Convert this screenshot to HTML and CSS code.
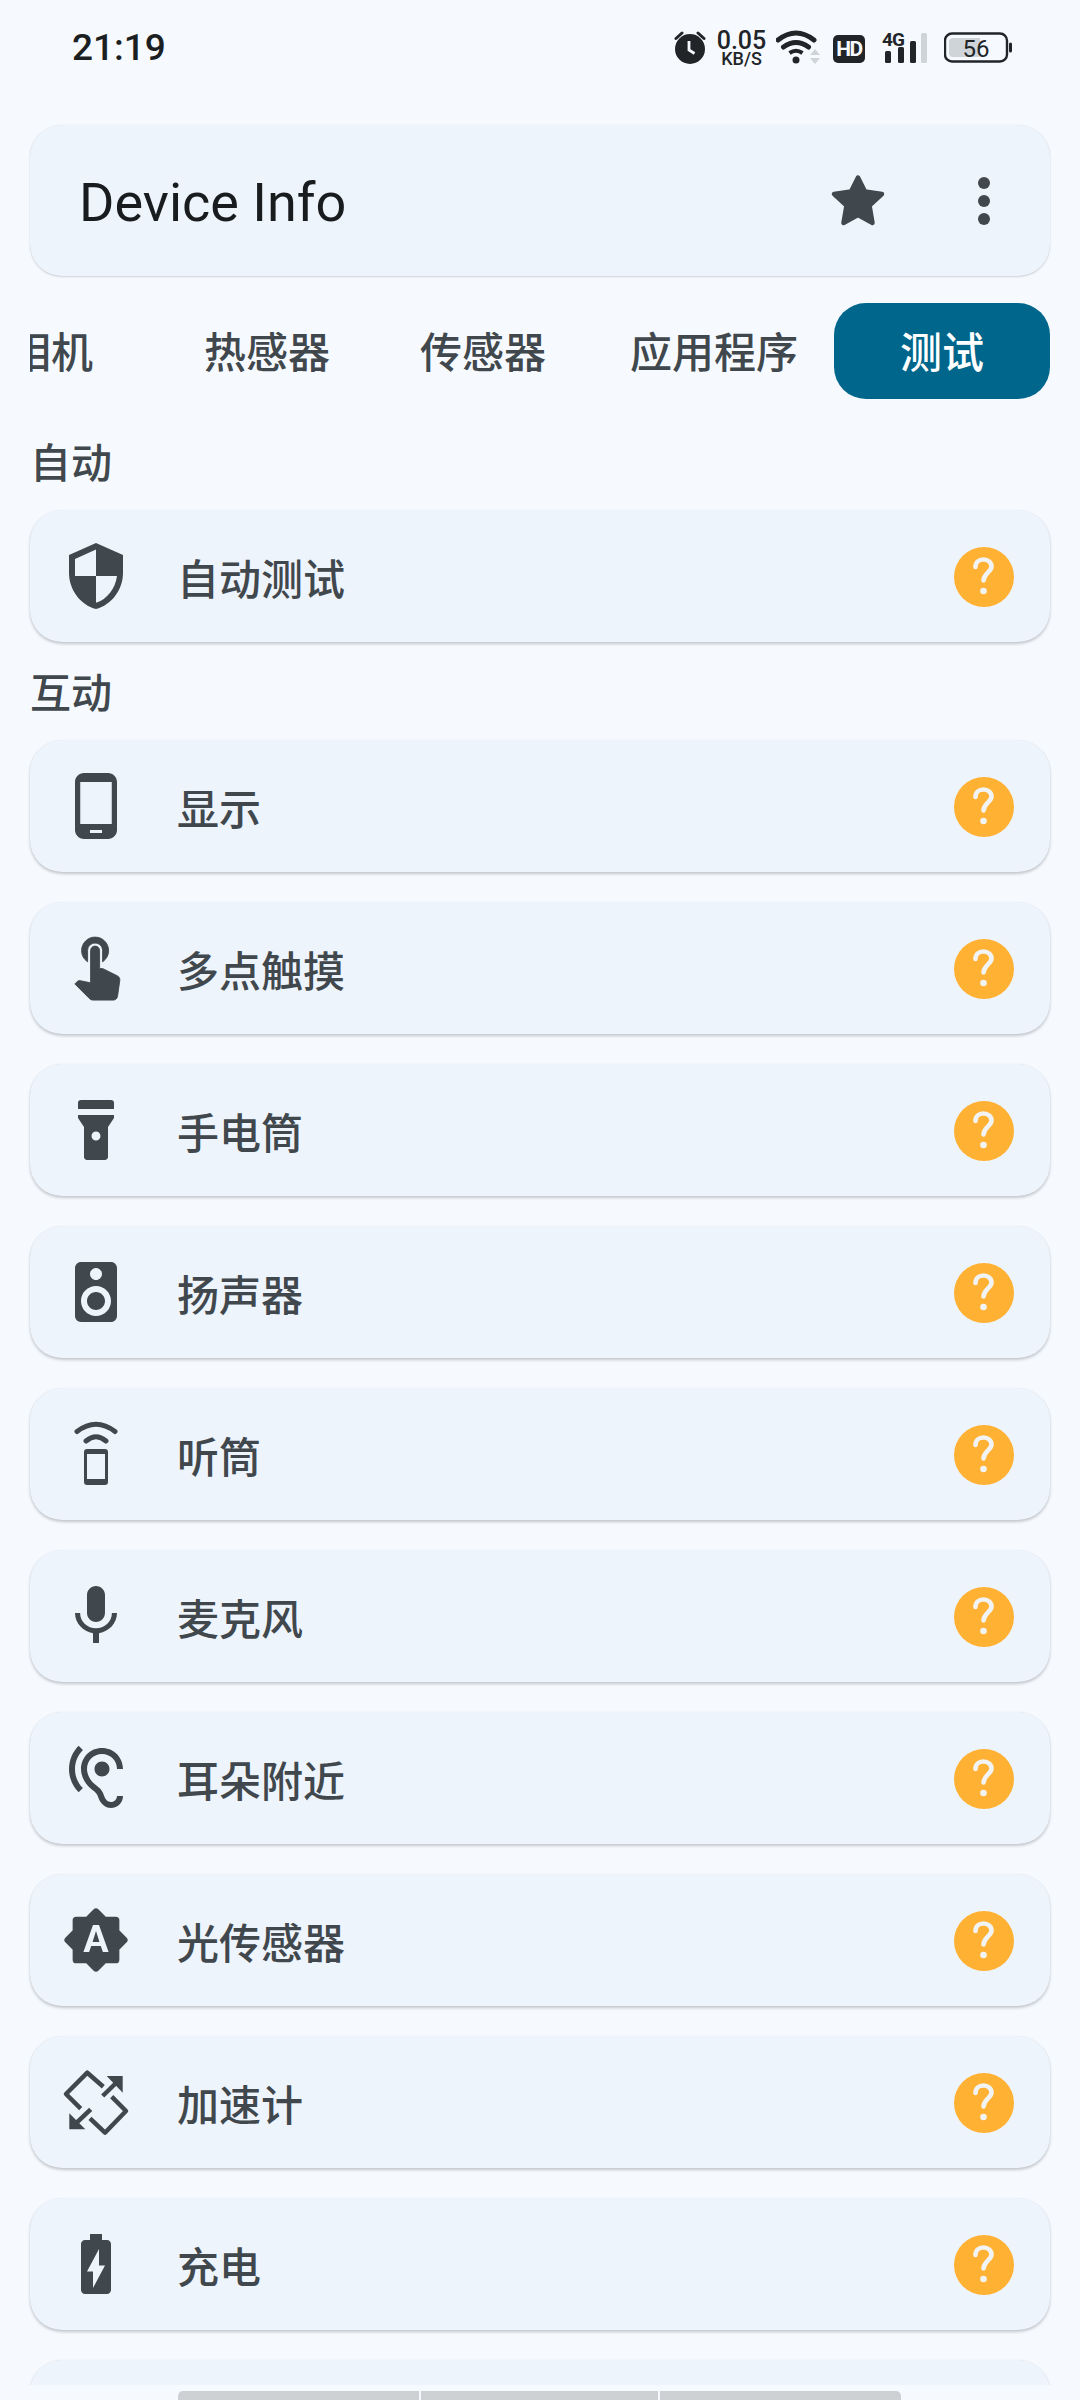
FILE: index.html
```html
<!DOCTYPE html>
<html lang="zh-CN">
<head>
<meta charset="utf-8">
<title>Device Info</title>
<link rel="stylesheet" href="styles.css">
</head>
<body>
<div class="app">
  <header class="status">
    <span class="time">21:19</span>
    <div class="status-icons">
      <svg class="st-alarm" width="32" height="34" viewBox="0 0 32 34"><circle cx="16" cy="19" r="15" fill="#222528"/><path d="M2 8.500 8 3M30 8.500 24 3" stroke="#222528" stroke-width="3" stroke-linecap="round" fill="none"/><path d="M15 11v9l5.500 3.500" stroke="#f6faff" stroke-width="2.800" fill="none"/></svg>
      <span class="st-speed"><span class="st-speed-num">0.05</span><span class="st-speed-unit">KB/S</span></span>
      <svg class="st-wifi" width="45" height="34" viewBox="0 0 45 34"><g fill="none" stroke="#222528" stroke-linecap="round"><path d="M2 10Q20-4 38 10" stroke-width="5"/><path d="M7.500 17Q20 8 32.500 17" stroke-width="5"/></g><path d="M13.500 23Q20 18.500 26.500 23" fill="none" stroke="#222528" stroke-width="4"/><circle cx="20" cy="30" r="3.500" fill="#222528"/><path d="M39 19l5 6H34zM34 28h10l-5 6z" fill="#cfd4d8"/></svg>
      <span class="st-hd">HD</span>
      <svg class="st-signal" width="45" height="34" viewBox="0 0 45 34"><text x="0" y="16" class="st-4g">4G</text><rect x="3" y="21" width="6" height="12" rx="1.500" fill="#222528"/><rect x="16" y="17" width="6" height="16" rx="1.500" fill="#222528"/><rect x="28" y="11" width="6" height="22" rx="1.500" fill="#222528"/><rect x="39" y="3" width="6" height="30" rx="1.500" fill="#cfd4d8"/></svg>
      <svg class="st-batt" width="68" height="32" viewBox="0 0 68 32"><rect x="1" y="1.500" width="62" height="28" rx="7" fill="none" stroke="#222528" stroke-width="2.400"/><path d="M9 6h27v19H9a4 4 0 0 1-4-4V10a4 4 0 0 1 4-4z" fill="#cfd4d8"/><rect x="65" y="10.500" width="3" height="10" rx="1.500" fill="#222528"/><text x="32" y="25" text-anchor="middle" class="st-56">56</text></svg>
    </div>
  </header>

  <div class="topbar">
    <h1 class="title">Device Info</h1>
    <svg class="ico star" viewBox="0 0 72 72"><path d="M36 12.500 43 26.500 60 29 47.500 40.500 50.500 58 36 50 21.500 58 24.500 40.500 12 29 29 26.500z" fill="#41484d" stroke="#41484d" stroke-width="4.500" stroke-linejoin="round"/></svg>
    <svg class="ico" viewBox="0 0 24 24"><circle cx="12" cy="6" r="2"/><circle cx="12" cy="12" r="2"/><circle cx="12" cy="18" r="2"/></svg>
  </div>

  <nav class="tabs">
    <span class="tab">相机</span>
    <span class="tab">热感器</span>
    <span class="tab">传感器</span>
    <span class="tab tab-wide">应用程序</span>
    <span class="tab tab-active">测试</span>
  </nav>

  <main class="content">
    <h2 class="label label-first">自动</h2>
    <div class="row">
      <svg class="ico" viewBox="0 0 24 24"><path d="M12 1L3 5v6c0 5.550 3.840 10.740 9 12 5.160-1.260 9-6.450 9-12V5l-9-4zm0 10.990h7c-.53 4.120-3.280 7.790-7 8.940V12H5V6.300l7-3.110v8.800z"/></svg>
      <span class="row-text">自动测试</span>
      <svg class="help" viewBox="0 0 60 60"><circle cx="30" cy="30" r="30" fill="#ffb133"/><path d="M21.500 20c0-4.500 3.500-7.500 8-7.500s8 3 8 7c0 5.500-7.500 6.500-8 14" fill="none" stroke="#f1f3f4" stroke-width="4.600" stroke-linecap="round"/><circle cx="29.500" cy="44" r="3.300" fill="#f1f3f4"/></svg>
    </div>

    <h2 class="label">互动</h2>
    <div class="rows">
      <div class="row">
        <svg class="ico" viewBox="0 0 24 24"><path d="M16 1H8C6.340 1 5 2.340 5 4v16c0 1.660 1.340 3 3 3h8c1.660 0 3-1.340 3-3V4c0-1.660-1.340-3-3-3zm-2 20h-4v-1h4v1zm3.250-3H6.750V4h10.500v14z"/></svg>
        <span class="row-text">显示</span>
        <svg class="help" viewBox="0 0 60 60"><circle cx="30" cy="30" r="30" fill="#ffb133"/><path d="M21.500 20c0-4.500 3.500-7.500 8-7.500s8 3 8 7c0 5.500-7.500 6.500-8 14" fill="none" stroke="#f1f3f4" stroke-width="4.600" stroke-linecap="round"/><circle cx="29.500" cy="44" r="3.300" fill="#f1f3f4"/></svg>
      </div>
      <div class="row">
        <svg class="ico" viewBox="0 0 24 24"><path transform="translate(.2 -1.300)" stroke="#41484d" stroke-width=".3" d="M9 11.240V7.500C9 6.120 10.120 5 11.500 5S14 6.120 14 7.500v3.740c1.210-.81 2-2.180 2-3.740C16 5.010 13.990 3 11.500 3S7 5.010 7 7.500c0 1.560.79 2.930 2 3.740zm9.840 4.630l-4.540-2.260c-.17-.07-.35-.11-.54-.11H13v-6c0-.83-.67-1.500-1.500-1.500S10 6.670 10 7.500v10.740l-3.430-.72c-.08-.01-.15-.03-.24-.03-.31 0-.59.13-.79.33l-.79.8 4.940 4.940c.27.27.65.44 1.060.44h6.790c.75 0 1.330-.55 1.440-1.280l.75-5.270c.01-.07.02-.14.02-.2 0-.62-.38-1.160-.91-1.380z"/></svg>
        <span class="row-text">多点触摸</span>
        <svg class="help" viewBox="0 0 60 60"><circle cx="30" cy="30" r="30" fill="#ffb133"/><path d="M21.500 20c0-4.500 3.500-7.500 8-7.500s8 3 8 7c0 5.500-7.500 6.500-8 14" fill="none" stroke="#f1f3f4" stroke-width="4.600" stroke-linecap="round"/><circle cx="29.500" cy="44" r="3.300" fill="#f1f3f4"/></svg>
      </div>
      <div class="row">
        <svg class="ico" viewBox="0 0 24 24"><path d="M7 2h10a1 1 0 0 1 1 1v2H6V3a1 1 0 0 1 1-1zM6 7v1l2 3v10c0 .55.45 1 1 1h6c.55 0 1-.45 1-1V11l2-3V7H6zm6 8.500c-.83 0-1.500-.67-1.500-1.500s.67-1.500 1.500-1.500 1.500.67 1.500 1.500-.67 1.500-1.500 1.500z"/></svg>
        <span class="row-text">手电筒</span>
        <svg class="help" viewBox="0 0 60 60"><circle cx="30" cy="30" r="30" fill="#ffb133"/><path d="M21.500 20c0-4.500 3.500-7.500 8-7.500s8 3 8 7c0 5.500-7.500 6.500-8 14" fill="none" stroke="#f1f3f4" stroke-width="4.600" stroke-linecap="round"/><circle cx="29.500" cy="44" r="3.300" fill="#f1f3f4"/></svg>
      </div>
      <div class="row">
        <svg class="ico" viewBox="0 0 24 24"><path d="M17 2H7c-1.100 0-2 .9-2 2v16c0 1.100.9 1.990 2 1.990L17 22c1.100 0 2-.9 2-2V4c0-1.100-.9-2-2-2zm-5 2c1.100 0 2 .9 2 2s-.9 2-2 2c-1.110 0-2-.9-2-2s.89-2 2-2zm0 16c-2.760 0-5-2.240-5-5s2.240-5 5-5 5 2.240 5 5-2.240 5-5 5zm0-8c-1.660 0-3 1.340-3 3s1.340 3 3 3 3-1.340 3-3-1.340-3-3-3z"/></svg>
        <span class="row-text">扬声器</span>
        <svg class="help" viewBox="0 0 60 60"><circle cx="30" cy="30" r="30" fill="#ffb133"/><path d="M21.500 20c0-4.500 3.500-7.500 8-7.500s8 3 8 7c0 5.500-7.500 6.500-8 14" fill="none" stroke="#f1f3f4" stroke-width="4.600" stroke-linecap="round"/><circle cx="29.500" cy="44" r="3.300" fill="#f1f3f4"/></svg>
      </div>
      <div class="row">
        <svg class="ico" viewBox="0 0 72 72"><path d="M17 13.500Q36-1 55 13.500M26 23Q36 14.500 46 23" fill="none" stroke="#41484d" stroke-width="5" stroke-linecap="round"/><path fill-rule="evenodd" d="M27 31h18a3 3 0 0 1 3 3v30a3 3 0 0 1-3 3H27a3 3 0 0 1-3-3V34a3 3 0 0 1 3-3zm0 5v25h18V36z"/></svg>
        <span class="row-text">听筒</span>
        <svg class="help" viewBox="0 0 60 60"><circle cx="30" cy="30" r="30" fill="#ffb133"/><path d="M21.500 20c0-4.500 3.500-7.500 8-7.500s8 3 8 7c0 5.500-7.500 6.500-8 14" fill="none" stroke="#f1f3f4" stroke-width="4.600" stroke-linecap="round"/><circle cx="29.500" cy="44" r="3.300" fill="#f1f3f4"/></svg>
      </div>
      <div class="row">
        <svg class="ico" viewBox="0 0 24 24"><path d="M12 14c1.660 0 2.990-1.340 2.990-3L15 5c0-1.660-1.340-3-3-3S9 3.340 9 5v6c0 1.660 1.340 3 3 3zm5.300-3c0 3-2.540 5.100-5.300 5.100S6.700 14 6.700 11H5c0 3.410 2.720 6.230 6 6.720V21h2v-3.280c3.280-.48 6-3.300 6-6.720h-1.700z"/></svg>
        <span class="row-text">麦克风</span>
        <svg class="help" viewBox="0 0 60 60"><circle cx="30" cy="30" r="30" fill="#ffb133"/><path d="M21.500 20c0-4.500 3.500-7.500 8-7.500s8 3 8 7c0 5.500-7.500 6.500-8 14" fill="none" stroke="#f1f3f4" stroke-width="4.600" stroke-linecap="round"/><circle cx="29.500" cy="44" r="3.300" fill="#f1f3f4"/></svg>
      </div>
      <div class="row">
        <svg class="ico" viewBox="0 0 24 24"><path d="M17 20c-.29 0-.56-.06-.76-.15-.71-.37-1.210-.88-1.710-2.380-.51-1.560-1.470-2.290-2.390-3-.79-.61-1.610-1.240-2.320-2.530C9.290 10.980 9 9.930 9 9c0-2.800 2.200-5 5-5s5 2.200 5 5h2c0-3.930-3.070-7-7-7S7 5.070 7 9c0 1.260.38 2.650 1.070 3.900.91 1.650 1.980 2.480 2.850 3.150.81.62 1.390 1.070 1.710 2.050.6 1.820 1.370 2.840 2.730 3.550.51.23 1.070.35 1.640.35 2.210 0 4-1.790 4-4h-2c0 1.100-.9 2-2 2zM7.640 2.640L6.220 1.220C4.230 3.210 3 5.960 3 9s1.230 5.790 3.220 7.780l1.410-1.410C6.010 13.740 5 11.490 5 9s1.010-4.740 2.640-6.360zM11.500 9c0 1.380 1.120 2.500 2.500 2.500s2.500-1.120 2.500-2.500-1.120-2.500-2.500-2.500-2.500 1.120-2.500 2.500z"/></svg>
        <span class="row-text">耳朵附近</span>
        <svg class="help" viewBox="0 0 60 60"><circle cx="30" cy="30" r="30" fill="#ffb133"/><path d="M21.500 20c0-4.500 3.500-7.500 8-7.500s8 3 8 7c0 5.500-7.500 6.500-8 14" fill="none" stroke="#f1f3f4" stroke-width="4.600" stroke-linecap="round"/><circle cx="29.500" cy="44" r="3.300" fill="#f1f3f4"/></svg>
      </div>
      <div class="row">
        <svg class="ico" viewBox="0 0 24 24"><path transform="translate(12 12) scale(.82) translate(-12 -12)" d="M20 8.690V4h-4.690L12 .69 8.690 4H4v4.690L.69 12 4 15.310V20h4.690L12 23.310 15.310 20H20v-4.690L23.310 12 20 8.690z" stroke="#41484d" stroke-width="3" stroke-linejoin="round"/><path fill="#eef4fc" fill-rule="evenodd" d="M14.300 16l-.7-2h-3.200l-.7 2H7.800L11 7h2l3.200 9h-1.900zM10.850 12.650h2.300L12 9z"/></svg>
        <span class="row-text">光传感器</span>
        <svg class="help" viewBox="0 0 60 60"><circle cx="30" cy="30" r="30" fill="#ffb133"/><path d="M21.500 20c0-4.500 3.500-7.500 8-7.500s8 3 8 7c0 5.500-7.500 6.500-8 14" fill="none" stroke="#f1f3f4" stroke-width="4.600" stroke-linecap="round"/><circle cx="29.500" cy="44" r="3.300" fill="#f1f3f4"/></svg>
      </div>
      <div class="row">
        <svg class="ico" viewBox="0 0 72 72"><g fill="none" stroke="#41484d" stroke-width="4.500" stroke-linecap="butt" stroke-linejoin="round"><path d="M43.300 20.700 27.300 6.700 6 28 20.700 42.700"/><path d="M51.700 30.700 66 45 45 66.700 30 52.300"/><path d="M42.700 30 55 18"/><path d="M30.700 43.300 16.700 56.700"/></g><path d="M46.700 10H62.700V26.700zM9.300 47.300V63.300H25.300z"/></svg>
        <span class="row-text">加速计</span>
        <svg class="help" viewBox="0 0 60 60"><circle cx="30" cy="30" r="30" fill="#ffb133"/><path d="M21.500 20c0-4.500 3.500-7.500 8-7.500s8 3 8 7c0 5.500-7.500 6.500-8 14" fill="none" stroke="#f1f3f4" stroke-width="4.600" stroke-linecap="round"/><circle cx="29.500" cy="44" r="3.300" fill="#f1f3f4"/></svg>
      </div>
      <div class="row">
        <svg class="ico" viewBox="0 0 24 24"><path d="M15.670 4H14V2h-4v2H8.330C7.600 4 7 4.600 7 5.330v15.330C7 21.400 7.600 22 8.330 22h7.330c.74 0 1.340-.6 1.340-1.330V5.330C17 4.600 16.400 4 15.670 4zM11 20v-5.500H9L13 7v5.500h2L11 20z"/></svg>
        <span class="row-text">充电</span>
        <svg class="help" viewBox="0 0 60 60"><circle cx="30" cy="30" r="30" fill="#ffb133"/><path d="M21.500 20c0-4.500 3.500-7.500 8-7.500s8 3 8 7c0 5.500-7.500 6.500-8 14" fill="none" stroke="#f1f3f4" stroke-width="4.600" stroke-linecap="round"/><circle cx="29.500" cy="44" r="3.300" fill="#f1f3f4"/></svg>
      </div>
      <div class="row"></div>
    </div>
  </main>

  <div class="scrollbar">
    <span class="seg seg-first"></span>
    <span class="seg"></span>
    <span class="seg seg-last"></span>
  </div>
</div>
</body>
</html>
```
FILE: styles.css
```css
* { box-sizing: border-box; }
html, body { margin: 0; padding: 0; }
body {
  width: 1080px;
  height: 2400px;
  overflow: hidden;
  background: #f6faff;
  color: #41484d;
  font-family: "Noto Sans CJK SC", Roboto, sans-serif;
}
.app { display: flex; flex-direction: column; height: 2400px; }

/* status bar */
.status {
  height: 125px;
  flex: none;
  display: flex;
  align-items: flex-start;
  justify-content: space-between;
  padding: 27px 68px 0 72px;
}
.time { font: 500 37px/42px Roboto, sans-serif; color: #1c1f22; }
.status-icons { display: flex; align-items: flex-start; margin-top: 3px; }
.status-icons svg { display: block; flex: none; }
.st-speed { display: flex; flex-direction: column; align-items: center; width: 51px; margin-left: 10px; color: #222528; font-family: Roboto, sans-serif; }
.st-speed-num { font-size: 25px; line-height: 21px; font-weight: 500; }
.st-speed-unit { font-size: 18px; line-height: 15px; font-weight: 500; }
.st-wifi { margin-left: 9px; }
.st-hd {
  width: 32px; height: 28px; margin: 5px 0 0 12px;
  background: #222528; border-radius: 5px;
  color: #f6faff;
  font: 700 21px/28px Roboto, sans-serif; letter-spacing: -1.500px;
  text-align: center;
}
.st-signal { margin-left: 17px; overflow: visible; }
.st-4g { font: 700 19px Roboto, sans-serif; fill: #222528; letter-spacing: -1px; }
.st-batt { margin-left: 17px; margin-top: 2px; }
.st-56 { font: 400 24px Roboto, sans-serif; fill: #222528; }

/* top bar */
.topbar {
  flex: none;
  height: 151px;
  margin: 0 30px;
  padding: 0 30px 0 49px;
  display: flex;
  align-items: center;
  background: #eef4fc;
  border-radius: 32px;
  box-shadow: 0 1px 2px rgba(0, 0, 0, .16), 0 0 1px rgba(0, 0, 0, .1);
}
.title {
  flex: 1;
  margin: 4px 0 0;
  font: 400 54px/60px Roboto, sans-serif;
  color: #191c1e;
}
.ico { width: 72px; height: 72px; flex: none; fill: #41484d; display: block; }
.star { margin-right: 54px; }

/* tabs */
.tabs {
  flex: none;
  display: flex;
  justify-content: flex-end;
  height: 96px;
  margin: 27px 30px 0;
  overflow: hidden;
}
.tab {
  flex: none;
  width: 216px;
  height: 96px;
  padding-bottom: 4px;
  display: flex;
  align-items: center;
  justify-content: center;
  font-size: 42px;
  font-weight: 500;
  color: #41484d;
  border-radius: 32px;
}
.tab-wide { width: 243px; padding-left: 3px; }
.tab-active { background: #00668b; color: #fff; }

/* list */
.content {
  flex: 1;
  min-height: 0;
  overflow: hidden;
  padding: 0 30px;
}
.label {
  margin: 28px 0 30px 0;
  font-size: 41px;
  line-height: 40px;
  font-weight: 500;
  color: #41484d;
}
.label-first { margin-top: 41px; }
.rows { display: flex; flex-direction: column; gap: 30px; }
.row {
  flex: none;
  height: 132px;
  display: flex;
  align-items: center;
  padding: 0 36px 0 30px;
  background: #eef4fc;
  border-radius: 32px;
  box-shadow: 0 2px 3px rgba(0, 0, 0, .2), 0 0 1px rgba(0, 0, 0, .1);
}
.row-text {
  flex: 1;
  margin-left: 45px;
  font-size: 42px;
  font-weight: 500;
  color: #41484d;
}
.help { width: 60px; height: 60px; flex: none; display: block; margin-top: 2px; }

/* bottom scroll thumb */
.scrollbar {
  flex: none;
  height: 15px;
  padding: 6px 179px 0 178px;
  display: flex;
  gap: 2px;
}
.seg { background: #cdd1d4; height: 9px; flex: 1; }
.seg-first { border-radius: 5px 0 0 0; flex: 0 0 241px; }
.seg-last { border-radius: 0 5px 0 0; flex: 0 0 241px; }
```
